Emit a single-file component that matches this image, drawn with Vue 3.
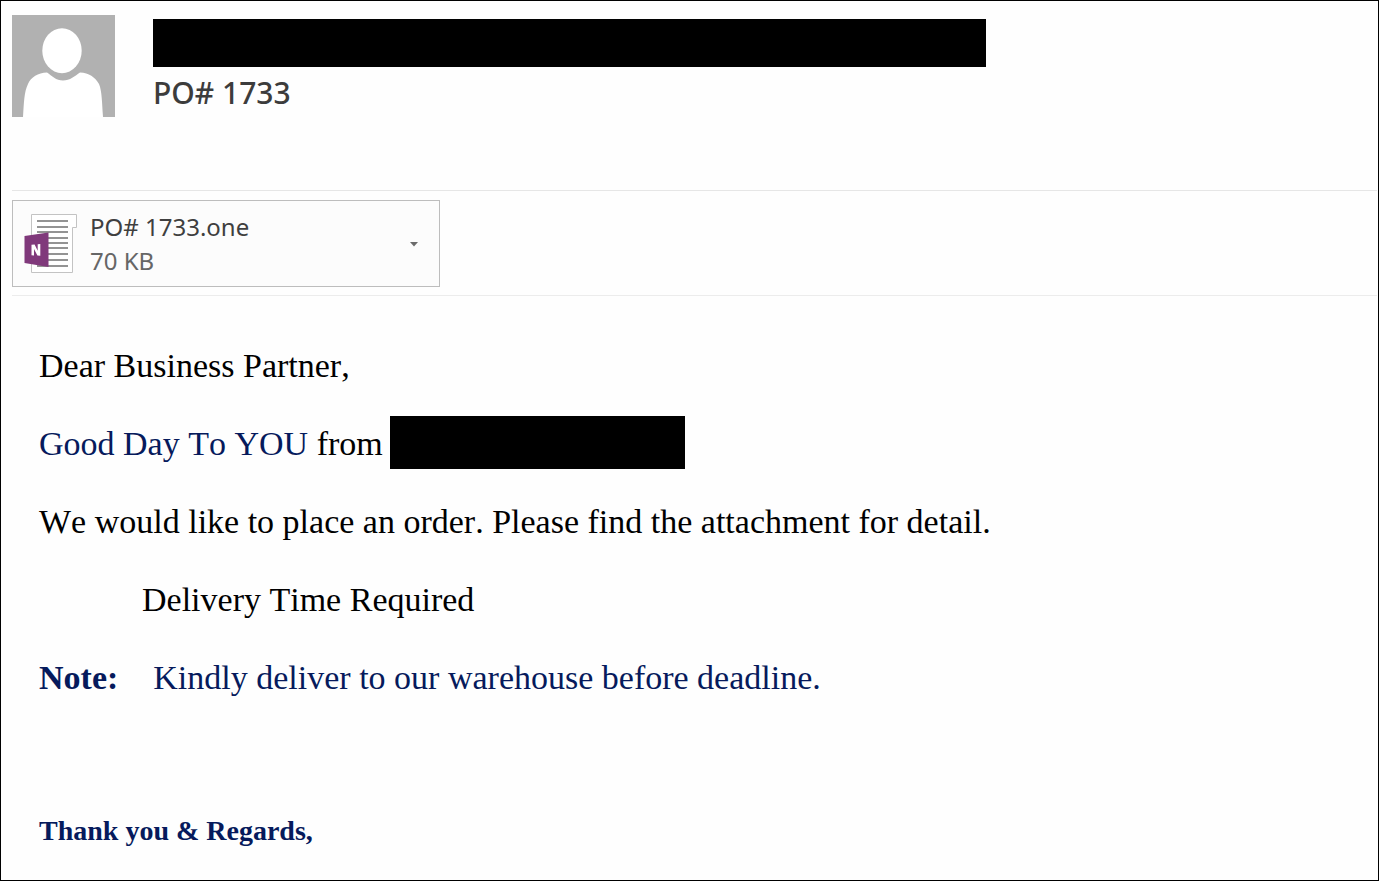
<script setup>
const attachment = { name: 'PO# 1733.one', size: '70 KB' }
const lineRows = [221, 227, 232, 238, 243, 248, 254, 260, 266]
</script>

<template>
  <main class="mail">
    <header class="head">
      <svg class="avatar" viewBox="0 0 103 102" role="img" aria-label="Sender">
        <rect width="103" height="102" fill="#b1b1b1" />
        <ellipse cx="50" cy="35.700" rx="19.700" ry="22.500" fill="#fff" />
        <path d="M11 102C12 88 12 77 16 69C19 62 26 58 35 57.500C40 61 44 65.500 51 65.500C58 65.500 63 61 68 57.500C77 58 83 62 87 69C90 76 90 88 91 102Z" fill="#fff" />
      </svg>
      <div class="who">
        <div class="redacted sender"></div>
        <h1 class="subject">PO# 1733</h1>
      </div>
    </header>

    <section class="attachments" aria-label="Attachments">
      <button class="file" type="button">
        <svg class="file-icon" viewBox="24 212 54 62" aria-hidden="true">
          <path d="M31.500 214.500H76.500V227.500H72.500V272.500H31.500Z" fill="#fff" stroke="#c3c3c3" />
          <path v-for="y in lineRows" :key="y" :d="`M37 ${y}H68`" stroke="#939393" stroke-width="2" />
          <path d="M24.500 236L48.500 232.500V267L24.500 263Z" fill="#80397b" />
          <path d="M31.500 244.700L34.600 244.500L37.700 250.800V244.300L40.300 244.100V255.800L37.400 255.600L34 248.900V255.400L31.500 255.200Z" fill="#fff" />
        </svg>
        <span class="file-text">
          <span class="file-name">{{ attachment.name }}</span>
          <span class="file-size">{{ attachment.size }}</span>
        </span>
        <svg class="caret" viewBox="0 0 8 5" aria-hidden="true"><path d="M0 0H8L4 4.500Z" fill="#6b6b6b" /></svg>
      </button>
    </section>

    <article class="body">
      <p>Dear Business Partner,</p>
      <p class="greeting"><span><span class="navy">Good Day To YOU</span> from</span><span class="redacted company"></span></p>
      <p>We would like to place an order. Please find the attachment for detail.</p>
      <p class="indent">Delivery Time Required</p>
      <p class="note navy"><strong>Note:</strong><span>Kindly deliver to our warehouse before deadline.</span></p>
      <p class="regards navy">Thank you &amp; Regards,</p>
    </article>
  </main>
</template>

<style>
body {
  margin: 0;
  background: #fff;
}
</style>

<style scoped>
.mail {
  box-sizing: border-box;
  min-height: 100vh;
  border: 1px solid #000;
  background: #fefefe;
  color: #000;
}
.head {
  display: flex;
  gap: 38px;
  padding: 14px 11px 0;
  min-height: 175px;
}
.avatar {
  flex: none;
  width: 103px;
  height: 102px;
}
.who {
  flex: 1;
  padding-top: 4px;
}
.redacted {
  background: #000;
}
.sender {
  width: 69%;
  max-width: 833px;
  height: 48px;
}
.subject {
  margin: 5px 0 0;
  font: 500 30px/42px "Noto Sans", "Open Sans", sans-serif;
  color: #3c3c3c;
}
.attachments {
  margin: 0 1px 0 11px;
  padding: 9px 0 8px;
  border-top: 1px solid #e6e6e6;
  border-bottom: 1px solid #ececec;
}
.file {
  display: flex;
  align-items: center;
  box-sizing: border-box;
  width: 428px;
  padding: 9px 21px 8px 11px;
  border: 1px solid #bdbdbd;
  background: #fcfcfc;
  text-align: left;
  font: 24px/34px "Noto Sans", "Open Sans", sans-serif;
}
.file-icon {
  flex: none;
  align-self: flex-start;
  margin-top: 2px;
  width: 54px;
  height: 62px;
}
.file-text {
  display: flex;
  flex-direction: column;
  flex: 1;
  margin-left: 12px;
}
.file-name {
  color: #3f3f3f;
}
.file-size {
  color: #666;
}
.caret {
  width: 8px;
  height: 5px;
}
.body {
  display: flex;
  flex-direction: column;
  gap: 39px;
  padding: 50px 38px 28px;
  font: 34px/39px "Liberation Serif", "Times New Roman", serif;
  font-kerning: none;
}
.body p {
  margin: 0;
}
.navy {
  color: #061a5c;
}
.greeting {
  display: flex;
  align-items: center;
  gap: 7px;
}
.company {
  width: 295px;
  height: 53px;
  margin: -8px 0 -6px;
}
.body .indent {
  padding-left: 103px;
}
.note {
  display: flex;
  gap: 35px;
}
.body .regards {
  margin-top: 75px;
  font-weight: bold;
  font-size: 28px;
}
</style>
